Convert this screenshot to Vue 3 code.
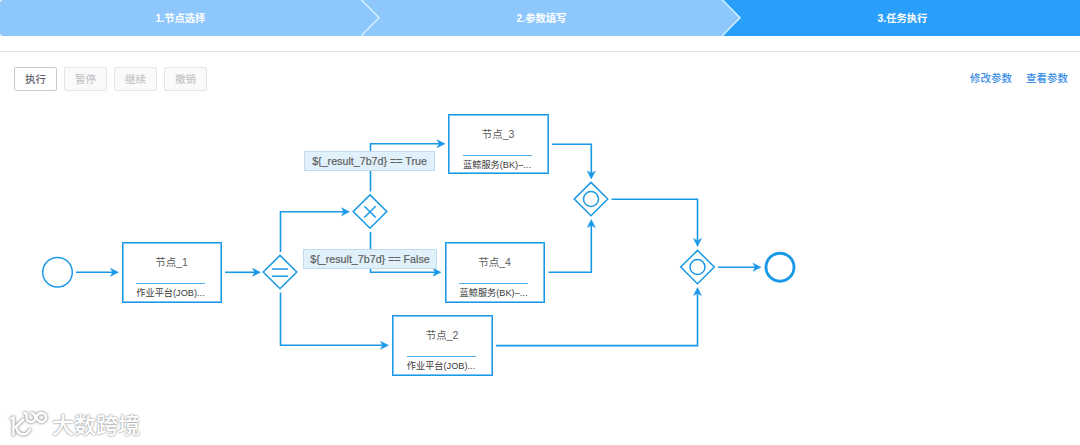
<script setup>
import { ref } from 'vue';

const steps = ref([
  { id: 1, name: '节点选择' },
  { id: 2, name: '参数填写' },
  { id: 3, name: '任务执行' }
]);
const currentStep = ref(3);

const operations = ref([
  { name: '执行', disabled: false },
  { name: '暂停', disabled: true },
  { name: '继续', disabled: true },
  { name: '撤销', disabled: true }
]);

const tasks = ref([
  { name: '节点_1', type: '作业平台(JOB)...', x: 121.5, y: 242 },
  { name: '节点_3', type: '蓝鲸服务(BK)–...', x: 448, y: 113.5 },
  { name: '节点_4', type: '蓝鲸服务(BK)–...', x: 444.5, y: 242 },
  { name: '节点_2', type: '作业平台(JOB)...', x: 392, y: 315 }
]);

const gateways = ref([
  { type: 'parallel', x: 280, y: 272 },
  { type: 'branch', x: 370, y: 211.5 },
  { type: 'converge', x: 591, y: 199 },
  { type: 'converge', x: 697.5, y: 267 }
]);

const conditions = ref([
  { text: '${_result_7b7d} == True', x: 304, y: 151, w: 131 },
  { text: '${_result_7b7d} == False', x: 303, y: 249, w: 134 }
]);

// lines end at the arrow tip, dir is the arrow rotation in degrees
const lines = ref([
  { path: 'M76 272.3H114', x: 118.5, y: 272.3, dir: 0 },
  { path: 'M225 272.3H256', x: 260.5, y: 272.3, dir: 0 },
  { path: 'M280.5 252V211.8H345', x: 349.5, y: 211.8, dir: 0 },
  { path: 'M280.5 292.5V345.3H384', x: 388.5, y: 345.3, dir: 0 },
  { path: 'M370.5 191.5V143.8H440', x: 445, y: 143.8, dir: 0 },
  { path: 'M370.5 232V272.3H436', x: 441, y: 272.3, dir: 0 },
  { path: 'M552 144.2H591.3V174', x: 591.3, y: 179, dir: 90 },
  { path: 'M548.5 272.3H591.3V224', x: 591.3, y: 219.5, dir: -90 },
  { path: 'M611.5 199.3H697.5V242', x: 697.5, y: 246.5, dir: 90 },
  { path: 'M496 345.6H697.5V292', x: 697.5, y: 287.5, dir: -90 },
  { path: 'M718 267.2H756', x: 761, y: 267.2, dir: 0 }
]);
</script>

<template>
  <div class="task-page">
    <header class="steps">
      <div
        v-for="step in steps"
        :key="step.id"
        class="step"
        :class="{ current: step.id === currentStep }"
      >
        <span>{{ step.id }}.{{ step.name }}</span>
        <svg v-if="step.id < steps.length" class="step-arrow" width="20" height="36" viewBox="0 0 20 36">
          <path d="M0 0L18 18L0 36Z" fill="#8ec7fc" />
          <path d="M0 -0.5L18 17.7L0 36" fill="none" stroke="#d5f0ff" stroke-width="1.5" />
        </svg>
      </div>
    </header>

    <div class="toolbar">
      <div class="operations">
        <button
          v-for="item in operations"
          :key="item.name"
          class="operation"
          :disabled="item.disabled"
        >{{ item.name }}</button>
      </div>
      <nav class="links">
        <a>修改参数</a>
        <a>查看参数</a>
      </nav>
    </div>

    <svg class="canvas" width="1080" height="445" viewBox="0 0 1080 445">
      <g v-for="line in lines" :key="line.path">
        <path :d="line.path" class="line" />
        <path
          d="M0 0L-8 -4L-5.8 0L-8 4Z"
          class="arrow"
          :transform="`translate(${line.x} ${line.y}) rotate(${line.dir})`"
        />
      </g>
      <circle cx="57.5" cy="272.3" r="14.8" class="shape" />
      <circle cx="780" cy="267.2" r="14" class="shape end" />
      <g
        v-for="(gateway, index) in gateways"
        :key="index"
        :transform="`translate(${gateway.x} ${gateway.y})`"
        class="shape"
      >
        <path d="M0 -16.6L16.8 0L0 16.8L-16.8 0Z" />
        <path v-if="gateway.type === 'parallel'" d="M-8 -3H8M-8 4.3H8" />
        <path v-else-if="gateway.type === 'branch'" d="M-5.7 -5.3L5.7 6M5.7 -5.3L-5.7 6" />
        <circle v-else r="7.5" />
      </g>
    </svg>

    <div
      v-for="task in tasks"
      :key="task.name"
      class="task"
      :style="{ left: task.x + 'px', top: task.y + 'px' }"
    >
      <div class="task-name">{{ task.name }}</div>
      <div class="task-type">{{ task.type }}</div>
    </div>

    <div
      v-for="item in conditions"
      :key="item.text"
      class="condition"
      :style="{ left: item.x + 'px', top: item.y + 'px', width: item.w + 'px' }"
    >{{ item.text }}</div>

    <div class="watermark">
      <svg width="42" height="32" viewBox="0 0 42 32">
        <path d="M3 9.500L5.500 8.500V26M15.500 10.500L8 17.500C9.500 26.500 18 28 22 20.500" />
        <path d="M16.500 4.500C17.500 3.500 18.500 4 18.500 5.500V8.500A4.500 4.500 0 1 0 23 4C28 4 28 13 33.500 13A4.500 4.500 0 1 0 33.500 4C31 4 29.500 5.500 28.500 7.500" />
      </svg>
      <span>大数跨境</span>
    </div>
  </div>
</template>

<style>
body {
  margin: 0;
  background: #fff;
}
</style>

<style scoped>
.task-page {
  position: relative;
  width: 1080px;
  height: 445px;
  overflow: hidden;
  font-family: "Liberation Sans", "Noto Sans CJK SC", sans-serif;
}

.steps {
  display: flex;
  height: 36px;
  border-radius: 3px 0 0 3px;
  overflow: hidden;
}

.step {
  position: relative;
  flex: none;
  box-sizing: border-box;
  width: 361px;
  display: flex;
  align-items: center;
  justify-content: center;
  padding-bottom: 2px;
  background: #8ec7fc;
  color: #fff;
  font-size: 10.3px;
  font-weight: bold;
}

.step.current {
  background: #2a9efb;
}

.step-arrow {
  position: absolute;
  left: 100%;
  top: 0;
  z-index: 1;
}

.toolbar {
  display: flex;
  justify-content: space-between;
  margin-top: 15px;
  padding: 15px 12px 0 14px;
  border-top: 1px solid #dfe1e5;
}

.operations {
  display: flex;
  gap: 7px;
}

.operation {
  box-sizing: border-box;
  width: 43px;
  height: 24px;
  padding: 0;
  border: 1px solid #c4cdd6;
  border-radius: 2px;
  background: #fff;
  color: #63656e;
  font-family: inherit;
  font-size: 10.5px;
  font-weight: 500;
  line-height: 20px;
}

.operation:disabled {
  border-color: #e4e5e8;
  background: #fafafa;
  color: #c4c5c8;
}

.links {
  display: flex;
  gap: 14px;
  color: #3a8fe4;
  font-size: 10.5px;
  font-weight: 500;
  line-height: 22px;
}

.canvas {
  position: absolute;
  left: 0;
  top: 0;
  pointer-events: none;
}

.line {
  fill: none;
  stroke: #1a98e8;
  stroke-width: 1.6;
}

.arrow {
  fill: #1a98e8;
  stroke: #1a98e8;
  stroke-width: 0.5;
}

.shape {
  fill: none;
  stroke: #1a98e8;
  stroke-width: 1.5;
}

.shape.end {
  stroke-width: 2.9;
}

.task {
  position: absolute;
  box-sizing: border-box;
  width: 100.5px;
  height: 60.5px;
  padding: 0 16px 0 13.5px;
  border: 1px solid #1a98e8;
  box-shadow: inset 0 0 0 1px #7cc5f3;
  background: #fff;
  text-align: center;
  white-space: nowrap;
}

.task-name {
  height: 40px;
  border-bottom: 1px solid #4fb1ee;
  color: #5c5c5c;
  font-size: 10.5px;
  line-height: 38px;
  text-indent: 2px;
}

.task-type {
  display: flex;
  justify-content: center;
  color: #3a3a3a;
  font-size: 9.2px;
  line-height: 18px;
}

.condition {
  position: absolute;
  box-sizing: border-box;
  height: 20px;
  border: 1px solid #c3dbea;
  background: #e0f1fb;
  color: #606060;
  font-size: 10.7px;
  line-height: 19px;
  text-align: center;
  white-space: nowrap;
  -webkit-text-stroke: 0.2px #606060;
}

.watermark {
  position: absolute;
  left: 8px;
  top: 409px;
  display: flex;
  gap: 2px;
  color: #fff;
  font-size: 22px;
  font-weight: 500;
  line-height: 34px;
  text-shadow: 0 0 2px #999, 0 0 2px #aaa;
}

.watermark svg {
  fill: none;
  stroke: #fff;
  stroke-width: 2.4;
  stroke-linecap: round;
  filter: drop-shadow(0 0 1px #999) drop-shadow(0 0 1px #bbb);
}
</style>
